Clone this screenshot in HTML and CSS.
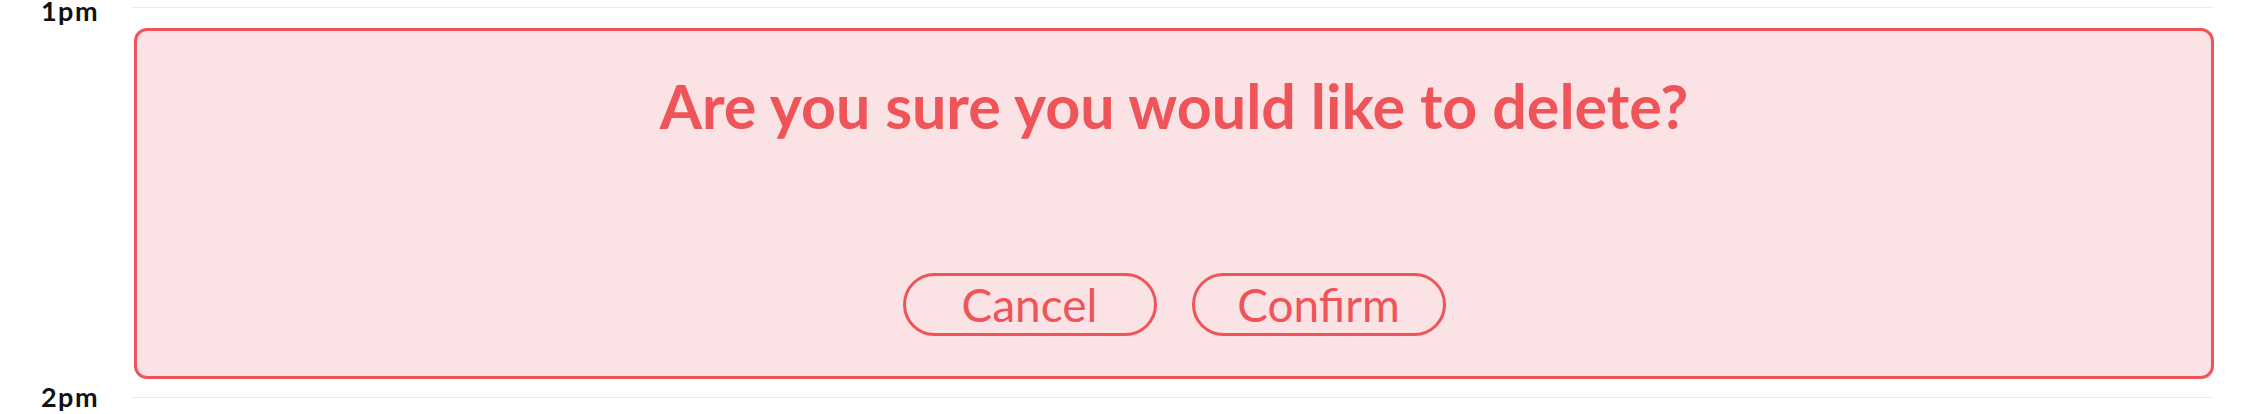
FILE: index.html
```html
<!DOCTYPE html>
<html lang="en">
<head>
<meta charset="utf-8">
<title>Delete event</title>
<link rel="stylesheet" href="styles.css">
</head>
<body>
<div class="day">
  <div class="hour-label hour-label--first">1pm</div>
  <div class="slot">
    <div class="confirm-card">
      <h2 class="confirm-title">Are you sure you would like to delete?</h2>
      <div class="confirm-actions">
        <button class="pill-btn" type="button">Cancel</button>
        <button class="pill-btn" type="button">Confirm</button>
      </div>
    </div>
  </div>
  <div class="hour-label">2pm</div>
  <div class="slot"></div>
</div>
</body>
</html>
```
FILE: styles.css
```css
html, body {
  margin: 0;
  padding: 0;
  background: #ffffff;
}

body {
  font-family: "Lato", "Open Sans", "Liberation Sans", sans-serif;
  padding-top: 7px;
  overflow: hidden;
}

.day {
  display: grid;
  grid-template-columns: 131px 1fr;
  padding-right: 32px;
}

.hour-label {
  font-weight: 700;
  font-size: 27px;
  letter-spacing: 1.5px;
  line-height: 20px;
  color: #111111;
  text-align: right;
  padding-right: 32px;
  margin-top: -10px;
}

.hour-label--first {
  margin-top: -6px;
}

.slot {
  border-top: 1px solid #ececec;
  height: 369px;
  padding: 20px 0 0 3px;
  box-sizing: content-box;
}

.confirm-card {
  box-sizing: border-box;
  height: 351px;
  border: 3px solid #ef5458;
  border-radius: 13px;
  background: #fbe3e5;
  display: flex;
  flex-direction: column;
  align-items: center;
  padding: 39px 0 40px;
}

.confirm-title {
  margin: 0;
  font-size: 61px;
  line-height: 72px;
  font-weight: 700;
  color: #ef5458;
}

.confirm-actions {
  margin-top: auto;
  display: flex;
  gap: 35px;
}

.pill-btn {
  box-sizing: border-box;
  width: 254px;
  height: 63px;
  border: 3px solid #ef5458;
  border-radius: 32px;
  background: transparent;
  color: #ef5458;
  font-family: inherit;
  font-size: 46px;
  line-height: 57px;
  padding: 0;
  font-weight: 400;
}
```
